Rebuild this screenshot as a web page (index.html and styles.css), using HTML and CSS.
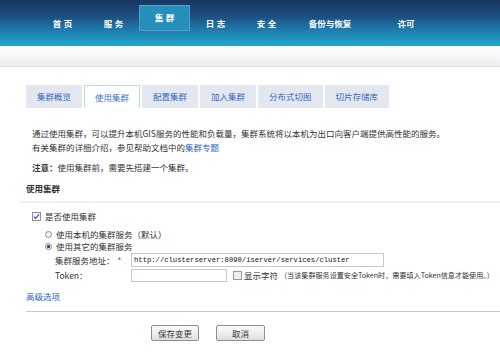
FILE: index.html
```html
<!DOCTYPE html>
<html lang="zh">
<head>
<meta charset="utf-8">
<title>使用集群</title>
<link rel="stylesheet" href="styles.css">
</head>
<body>
<header class="topbar">
  <nav class="nav">
    <a class="nav-item spaced">首页</a>
    <a class="nav-item spaced">服务</a>
    <a class="nav-item spaced active">集群</a>
    <a class="nav-item spaced">日志</a>
    <a class="nav-item spaced">安全</a>
    <a class="nav-item wide">备份与恢复</a>
    <a class="nav-item wide">许可</a>
  </nav>
</header>
<div class="subbar"></div>
<main class="content">
  <ul class="tabs">
    <li class="tab">集群概览</li>
    <li class="tab active">使用集群</li>
    <li class="tab">配置集群</li>
    <li class="tab">加入集群</li>
    <li class="tab">分布式切图</li>
    <li class="tab">切片存储库</li>
  </ul>
  <p class="desc first">通过使用集群，可以提升本机GIS服务的性能和负载量，集群系统将以本机为出口向客户端提供高性能的服务。</p>
  <p class="desc">有关集群的详细介绍，参见帮助文档中的<a class="link">集群专题</a></p>
  <p class="desc note"><b>注意：</b>使用集群前，需要先搭建一个集群。</p>
  <h3 class="section-title">使用集群</h3>
  <div class="divider"></div>
  <div class="check-row">
    <svg class="cb" width="9" height="9" viewBox="0 0 9 9"><rect x="0.5" y="0.5" width="8" height="8" fill="#f4f4f4" stroke="#8f8f8f"/><path d="M2 4.6 L3.7 6.3 L7 2.4" fill="none" stroke="#3b5ea8" stroke-width="1.3"/></svg>
    <span>是否使用集群</span>
  </div>
  <div class="radio-row">
    <svg class="radio" width="7" height="7" viewBox="0 0 7 7"><circle cx="3.5" cy="3.5" r="3" fill="#f2f2f2" stroke="#8c8c8c"/></svg>
    <span>使用本机的集群服务（默认）</span>
  </div>
  <div class="radio-row">
    <svg class="radio" width="7" height="7" viewBox="0 0 7 7"><circle cx="3.5" cy="3.5" r="3" fill="#f2f2f2" stroke="#8c8c8c"/><circle cx="3.5" cy="3.5" r="1.6" fill="#333"/></svg>
    <span>使用其它的集群服务</span>
  </div>
  <div class="form-row">
    <label class="form-label">集群服务地址：<span class="req">*</span></label>
    <input class="text-input url" type="text" value="http://clusterserver:8090/iserver/services/cluster">
  </div>
  <div class="form-row token-row">
    <label class="form-label">Token：</label>
    <input class="text-input token" type="text" value="">
    <svg class="cb show-cb" width="9" height="9" viewBox="0 0 9 9"><rect x="0.5" y="0.5" width="8" height="8" fill="#f0f0f0" stroke="#9a9a9a"/></svg>
    <span class="show-label">显示字符</span>
    <span class="hint">（当该集群服务设置安全Token时，需要填入Token信息才能使用。）</span>
  </div>
  <a class="link adv">高级选项</a>
  <div class="divider2"></div>
  <div class="actions">
    <button class="btn save">保存变更</button>
    <button class="btn cancel">取消</button>
  </div>
</main>
</body>
</html>
```

FILE: styles.css
```css
* { box-sizing: border-box; }
html, body { margin: 0; padding: 0; background: #fff; }
body {
  font-family: "Noto Sans CJK SC", "Noto Sans", sans-serif;
  font-size: 8.5px;
  color: #333;
  width: 500px;
  height: 362px;
  overflow: hidden;
}

.topbar {
  height: 46px;
  background: linear-gradient(to bottom, #19365f 0%, #1c4f82 35%, #1f82b3 70%, #23a7cc 100%);
}
.nav {
  display: flex;
  height: 46px;
  padding-left: 37px;
  align-items: center;
}
.nav-item {
  display: flex;
  align-items: center;
  justify-content: center;
  color: #fff;
  font-weight: bold;
  font-size: 8.5px;
  width: 51px;
  text-decoration: none;
}
.nav-item.spaced { letter-spacing: 2.5px; text-indent: 2.5px; }
.nav-item.wide { width: 76px; }
.nav-item.active {
  align-self: flex-start;
  margin-top: 5px;
  height: 26px;
  padding-bottom: 2px;
  background: #2490bb;
  border: 1px solid #5a9cc4;
}

.subbar {
  height: 21px;
  background: linear-gradient(to bottom, #ffffff 0%, #f6f7f9 50%, #eaecef 100%);
  border-bottom: 1px solid #e0e2e6;
}

.content { padding-left: 26px; }

.tabs {
  list-style: none;
  margin: 18px 0 0 0;
  padding: 0;
  display: flex;
  gap: 2px;
}
.tab {
  height: 23px;
  line-height: 23px;
  padding: 0 11px;
  background: #e3e8f0;
  color: #3867c0;
}
.tab.active {
  background: #fff;
  border: 1px solid #bcd7ee;
  border-bottom: none;
  line-height: 22px;
  padding: 0 10px;
  color: #3d74c6;
}

.desc {
  margin: 0;
  padding-left: 6px;
  line-height: 14px;
}
.desc.first { margin-top: 18px; }
.desc.note { margin-top: 6px; }
.desc.note b { font-weight: bold; }
.link { color: #2b62c8; text-decoration: none; }

.section-title {
  margin: 7px 0 0 0;
  font-size: 8.5px;
  font-weight: bold;
  line-height: 14px;
}
.divider {
  margin: 6px 0 0 -7px;
  height: 2px;
  background: #f1f1f1;
}

.check-row {
  display: flex;
  align-items: center;
  margin-top: 6px;
  padding-left: 6px;
  height: 14px;
  gap: 4px;
}
.radio-row {
  display: flex;
  align-items: center;
  padding-left: 19px;
  height: 12px;
  gap: 4px;
}
.check-row + .radio-row { margin-top: 5px; }

.form-row {
  display: flex;
  align-items: center;
  height: 14px;
  padding-left: 29px;
  margin-top: 1px;
}
.token-row { margin-top: 1px; }
.form-label { width: 76px; flex: none; }
.req { color: #e0262b; margin-left: 3px; }
.text-input {
  height: 14px;
  border: 1px solid #c9c9c9;
  padding: 0 2px;
  font-family: "Liberation Mono", monospace;
  font-size: 7.2px;
  color: #111;
  outline: none;
  background: #fff;
}
.text-input.url { width: 253px; }
.text-input.token { width: 96px; height: 13px; }
.show-cb { margin-left: 6px; }
.show-label { margin-left: 2px; }
.hint { font-size: 7.1px; margin-left: 2px; }

.adv {
  display: block;
  margin-top: 7px;
  line-height: 14px;
  width: max-content;
}
.divider2 {
  margin-top: 8px;
  height: 1px;
  background: #c8c8c8;
}
.actions {
  display: flex;
  gap: 17px;
  margin: 13px 0 0 125px;
}
.btn {
  height: 16px;
  width: 48px;
  padding: 0;
  border: 1px solid #8f8f8f;
  border-radius: 2px;
  background: linear-gradient(to bottom, #fbfbfb 0%, #eeeeee 50%, #dedede 100%);
  font-family: "Noto Sans CJK SC", sans-serif;
  font-size: 8.5px;
  color: #333;
}
.btn.cancel { width: 49px; }
```
